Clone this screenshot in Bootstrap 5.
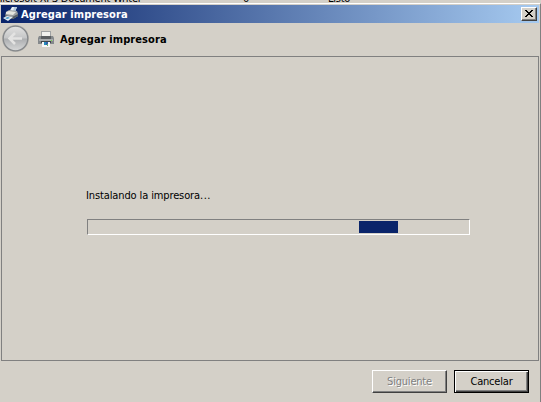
<!DOCTYPE html>
<html lang="es">
<head>
<meta charset="utf-8">
<meta name="viewport" content="width=device-width, initial-scale=1">
<title>Agregar impresora</title>
<link href="https://cdn.jsdelivr.net/npm/bootstrap@5.3.0/dist/css/bootstrap.min.css" rel="stylesheet">
<style>
body{width:541px;height:402px;background:#d4d0c8;color:#000;font:11px/14px "DejaVu Sans Condensed","DejaVu Sans",sans-serif;font-stretch:condensed}
.behind{height:3px;flex:none}
.behind span{line-height:14px;margin-top:-8px;white-space:nowrap;letter-spacing:-.25px}
.behind .c1{width:249px;margin-left:-6px}.behind .c2{width:85px}
.win{border-top:1px solid #fff;border-right:1px solid #808080;padding:1px 1px 0 1px;min-height:0}
.titlebar{height:18px;flex:none;background:linear-gradient(90deg,#0a246a,#a6caf0);color:#fff;padding:0 2px 0 1px}
.heading{font-weight:700;font-size:11px;letter-spacing:.1px;white-space:nowrap;padding-top:1px;line-height:14px}
.titlebar .heading{padding-left:2px}
.topnav .heading{margin-left:6px;padding-top:2px}
.close-box{width:16px;height:14px;border:1px solid;border-color:#fff #404040 #404040 #fff;box-shadow:inset -1px -1px #808080;background:#d4d0c8;padding:0;border-radius:0}
.topnav{height:33px;flex:none;padding:0 0 2px 0}
.pane{height:305px;flex:none;border:1px solid #808080;padding:132px 0 0 84px}
.status{letter-spacing:-.12px;white-space:nowrap}
.dots{letter-spacing:.5px}
.track{width:383px;height:16px;border:1px solid;border-color:#808080 #fff #fff #808080;padding:1px 0;margin:16px 0 0 1px}
.chunk{width:39px;height:12px;background:#0a246a;margin-left:271px}
.foot{padding:9px 10px 0 0;gap:7px}
.dlg{width:75px;height:23px;border-radius:0;border:1px solid;border-color:#fff #404040 #404040 #fff;box-shadow:inset -1px -1px #808080;padding:0;font-size:11px;line-height:20px;color:#000;background:#d4d0c8;letter-spacing:-.2px}
.dlg:disabled{color:#808080;text-shadow:1px 1px #fff;opacity:1;border-color:#fff #404040 #404040 #fff;background:#d4d0c8}
.dlg.main{border-color:#000;box-shadow:inset 1px 1px #fff,inset -1px -1px #404040,inset -2px -2px #808080}
svg{display:block;flex:none}
</style>
<script src="https://cdn.jsdelivr.net/npm/bootstrap@5.3.0/dist/js/bootstrap.bundle.min.js"></script>
</head>
<body class="d-flex flex-column overflow-hidden">
<div class="behind d-flex overflow-hidden"><span class="c1">Microsoft XPS Document Writer</span><span class="c2">0</span><span>Listo</span></div>
<main class="win d-flex flex-column flex-grow-1">
  <header class="titlebar d-flex align-items-center">
    <svg width="17" height="16" viewBox="0 0 17 16"><path d="M7 6l3-5h5l-2 5z" fill="#e8f0f5"/><path d="M12 1h3l-2 5h-2z" fill="#b5cbdc"/><path d="M4 6l3-2 8 1 1 3v2l-5 3-8-3z" fill="#9a9da0"/><path d="M4 6l3-1 7 1-3 3-7-1z" fill="#e5e5df"/><path d="M3 9l7 2 6-3v2l-5 3-8-2z" fill="#555c63"/><path d="M1 12l4-2 6 1-5 4z" fill="#e4eef4"/><path d="M3 12l3-1 2 1-3 1z" fill="#3b93c4"/></svg>
    <span class="heading flex-grow-1">Agregar impresora</span>
    <button class="close-box d-flex align-items-center justify-content-center" aria-label="Cerrar"><svg width="14" height="12" shape-rendering="crispEdges"><path d="M3 2h2v1h1v1h2v-1h1v-1h2v1h-1v1h-1v1h-1v1h1v1h1v1h1v1h-2v-1h-1v-1h-2v1h-1v1h-2v-1h1v-1h1v-1h1v-1h-1v-1h-1v-1h-1z"/></svg></button>
  </header>
  <nav class="topnav d-flex align-items-center">
    <svg width="29" height="29" viewBox="0 0 29 29"><defs><linearGradient id="g" x1="0" y1="0" x2="0" y2="1"><stop stop-color="#e2e2e1"/><stop offset=".48" stop-color="#c5c6c7"/><stop offset=".52" stop-color="#acaeb0"/><stop offset="1" stop-color="#d8d9d9"/></linearGradient></defs><circle cx="14.5" cy="14.5" r="13.5" fill="#bbb8b2"/><circle cx="14.5" cy="14.5" r="12.3" fill="url(#g)" stroke="#85888b" stroke-width="1.3"/><path d="M21 14.5H9M14 9l-5.5 5.5L14 20" fill="none" stroke="#e3e3e2" stroke-width="2.5"/></svg>
    <svg class="ms-2" width="16" height="16" viewBox="0 0 16 16"><path d="M3 0h10v7H3z" fill="#a0a3a5"/><path d="M4 1h8v6H4z" fill="#f1f1ef"/><path d="M1 5h2v2h10V5h2l1 2v6H0V7z" fill="#85898c"/><path d="M1 8h14v2H1z" fill="#a9acae"/><path d="M3 5h10v3H3z" fill="#5b5f62"/><path d="M3 10h10v2H3z" fill="#404548"/><path d="M4 11h8v5H4z" fill="#f7f7f7"/><path d="M6 11h2v3H6z" fill="#278dbd"/><path d="M8 11h2v3H8z" fill="#325eab"/><path d="M9 13h1v2H9z" fill="#64af68"/><path d="M13 9h1v1h-1z" fill="#73dc3e"/></svg>
    <h1 class="heading mb-0">Agregar impresora</h1>
  </nav>
  <section class="pane">
    <div class="status">Instalando la impresora<span class="dots">...</span></div>
    <div class="track"><div class="chunk"></div></div>
  </section>
  <footer class="foot d-flex justify-content-end">
    <button class="btn dlg" disabled>Siguiente</button>
    <button class="btn dlg main">Cancelar</button>
  </footer>
</main>
</body>
</html>
